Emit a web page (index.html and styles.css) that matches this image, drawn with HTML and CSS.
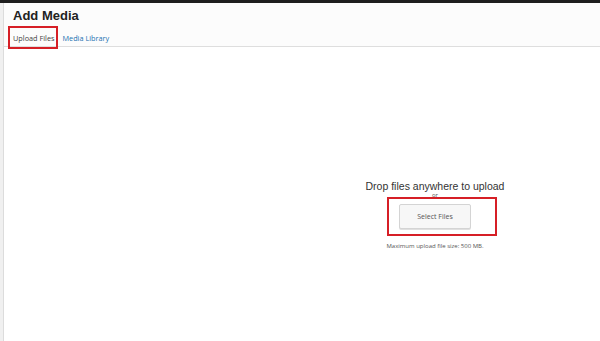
FILE: index.html
```html
<!DOCTYPE html>
<html>
<head>
<meta charset="utf-8">
<link rel="stylesheet" href="styles.css">
</head>
<body>
<div class="topbar"></div>
<div class="frame">
  <div class="edge"></div>
  <div class="content">
    <div class="header">
      <h1 class="title">Add Media</h1>
      <nav class="tabs">
        <span class="tab active">Upload Files<span class="mark mark-tab"></span></span>
        <span class="tab link">Media Library</span>
      </nav>
    </div>
    <div class="uploader">
      <div class="drop">Drop files anywhere to upload</div>
      <div class="or">or</div>
      <div class="btnwrap">
        <span class="mark mark-btn"></span>
        <button class="btn">Select Files</button>
      </div>
      <div class="max">Maximum upload file size: 500 MB.</div>
    </div>
  </div>
</div>
</body>
</html>
```
FILE: styles.css
```css
html, body {
  margin: 0;
  padding: 0;
  background: #fff;
  font-family: "Open Sans", "Liberation Sans", sans-serif;
  color: #444;
}
.topbar {
  height: 3px;
  background: #1e1e1e;
}
.frame {
  display: flex;
  height: 338px;
}
.edge {
  width: 3px;
  background: #f0f0f0;
  border-right: 1px solid #dcdcdc;
}
.content {
  flex: 1;
  display: flex;
  flex-direction: column;
}
.header {
  background: #fcfcfc;
  height: 43px;
  border-bottom: 1px solid #dedede;
  padding-left: 9px;
}
.title {
  margin: 0;
  padding-top: 5px;
  font-family: "Liberation Sans", Arial, sans-serif;
  font-size: 13px;
  font-weight: bold;
  color: #222;
  line-height: 16px;
}
.tabs {
  display: flex;
  gap: 8px;
  margin-top: 8px;
  font-size: 7.3px;
  line-height: 12px;
}
.tab {
  position: relative;
}
.tab.active { color: #444; }
.tab.link { color: #2271b1; }
.mark {
  position: absolute;
  border: 2px solid #d61f26;
  box-sizing: border-box;
}
.mark-tab {
  left: -5px;
  top: -6px;
  width: 50px;
  height: 23px;
}
.uploader {
  display: flex;
  flex-direction: column;
  align-items: center;
  width: 240px;
  margin-left: 311px;
  margin-top: 133px;
}
.drop {
  font-family: "Liberation Sans", Arial, sans-serif;
  font-size: 10.5px;
  line-height: 13px;
  color: #333;
}
.or {
  font-size: 6px;
  line-height: 7px;
  color: #555;
  margin-top: -1px;
  margin-bottom: 2px;
}
.btnwrap {
  position: relative;
  padding: 0;
}
.mark-btn {
  left: -12px;
  top: -4px;
  width: 110px;
  height: 39px;
}
.btn {
  display: block;
  margin-top: 3px;
  width: 72px;
  height: 25px;
  background: #f7f7f7;
  border: 1px solid #d4d4d4;
  border-radius: 2px;
  box-shadow: 0 1px 0 #e0e0e0;
  font-family: "Open Sans", "Liberation Sans", sans-serif;
  font-size: 7px;
  color: #555;
  padding: 0;
}
.max {
  margin-top: 13px;
  font-size: 6px;
  line-height: 8px;
  color: #555;
}
```
